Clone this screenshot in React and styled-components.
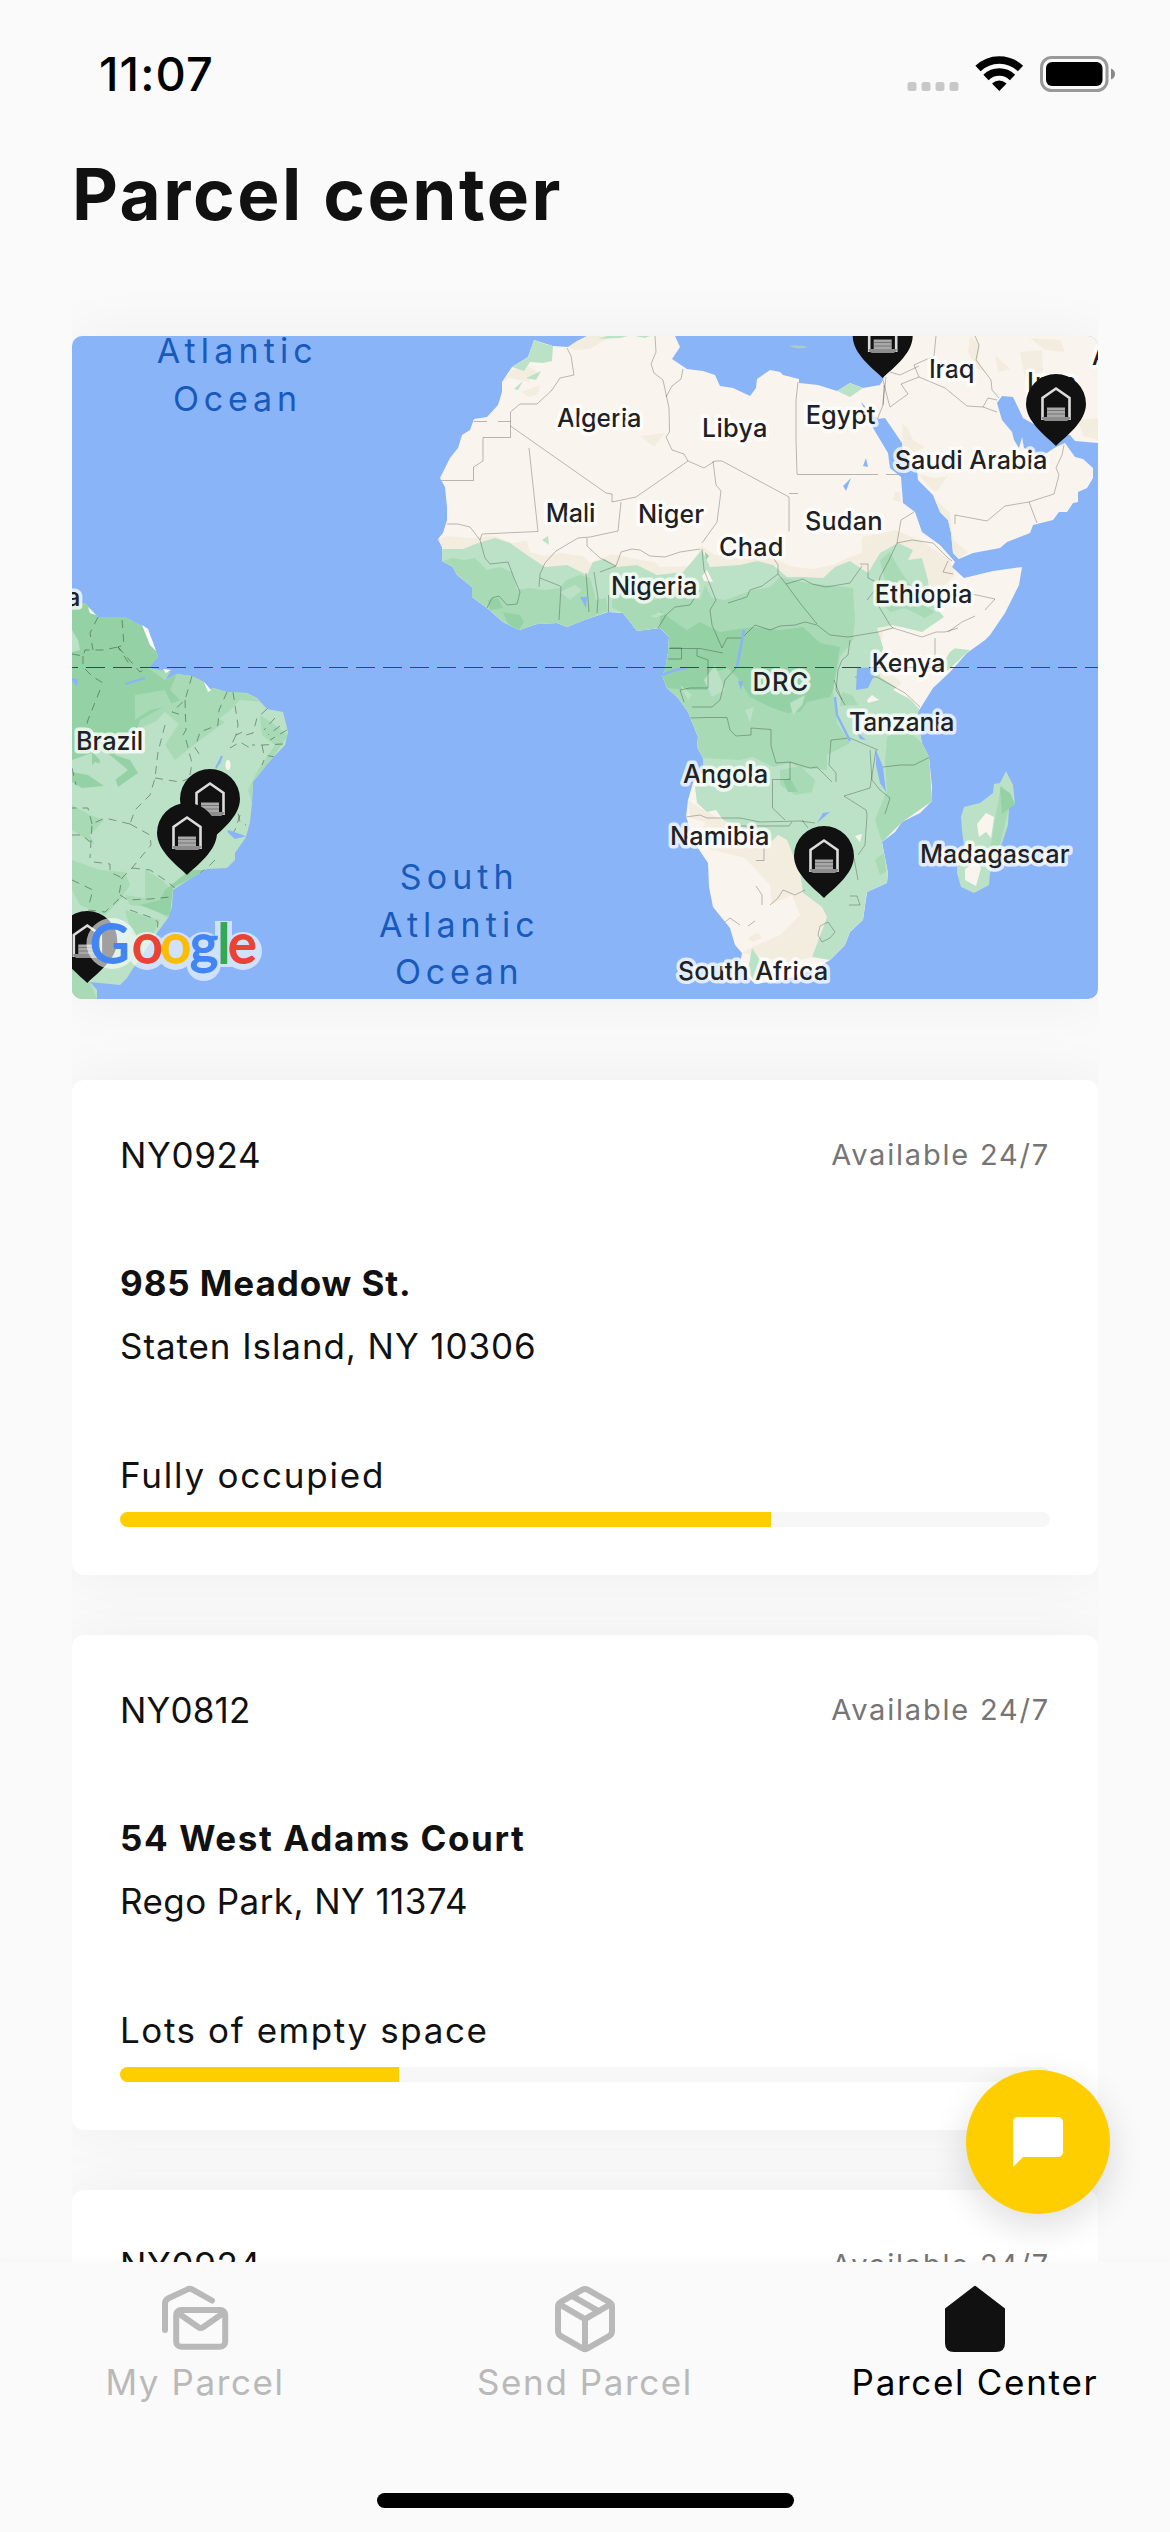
import React from "react";
import styled, { createGlobalStyle } from "styled-components";
import { FiPackage } from "react-icons/fi";
import { MdChatBubble } from "react-icons/md";

const GlobalStyle = createGlobalStyle`
  * { box-sizing: border-box; }
  body { margin: 0; background: #fafafa; }
`;

const Screen = styled.div`
  position: relative;
  display: flex;
  flex-direction: column;
  width: 1170px;
  height: 2532px;
  overflow: hidden;
  background: #fafafa;
  color: #111;
  font-family: Inter, "Liberation Sans", sans-serif;
`;

const StatusBar = styled.header`
  display: flex;
  align-items: center;
  justify-content: space-between;
  height: 138px;
  padding: 10px 54px 0 99px;
  color: #000;
`;

const Clock = styled.time`
  font-size: 47px;
  font-weight: 500;
  line-height: 60px;
  letter-spacing: 1.1px;
`;

const StatusIcons = styled.svg`
  display: block;
  width: 210px;
  height: 40px;
`;

const Header = styled.div`
  height: 138px;
  padding-left: 72px;
`;

const Title = styled.h1`
  margin: 0;
  font-size: 71px;
  line-height: 112px;
  font-weight: 700;
  letter-spacing: 2.5px;
`;

const Content = styled.main`
  display: flex;
  flex-direction: column;
  flex: 1;
  min-height: 0;
  margin: 0 72px;
  padding-top: 60px;
  overflow: hidden;
`;

const MapFrame = styled.section`
  flex: none;
  height: 663px;
  margin-bottom: 81px;
  border-radius: 10px;
  overflow: hidden;
  background: #8ab4f8;
  box-shadow: 0 0 60px rgba(17, 17, 17, 0.05);
`;

const MapSvg = styled.svg`
  display: block;
  width: 1026px;
  height: 663px;
`;

const CardList = styled.div`
  display: flex;
  flex-direction: column;
  gap: 60px;
`;

const Card = styled.article`
  display: flex;
  flex-direction: column;
  height: 495px;
  padding: 48px;
  border-radius: 12px;
  background: #fff;
  box-shadow: 0 0 60px rgba(17, 17, 17, 0.05);
`;

const CardHead = styled.div`
  display: flex;
  justify-content: space-between;
  align-items: center;
  margin-bottom: 74px;
`;

const Line = styled.div`
  font-size: 35px;
  line-height: 54px;
  white-space: nowrap;
  font-weight: ${(p) => (p.$bold ? 700 : 400)};
  letter-spacing: ${(p) => p.$spacing || 0}px;
`;

const Hours = styled.span`
  font-size: 29px;
  line-height: 54px;
  white-space: nowrap;
  color: #757575;
  letter-spacing: 1.8px;
`;

const Address = styled.div`
  display: flex;
  flex-direction: column;
  gap: 9px;
  margin-bottom: 75px;
`;

const Track = styled.div`
  height: 15px;
  margin-top: 10px;
  border-radius: 8px;
  overflow: hidden;
  background: #f7f7f7;
`;

const Fill = styled.div`
  height: 100%;
  background: #ffce00;
`;

const TabBar = styled.nav`
  position: relative;
  display: flex;
  flex-direction: column;
  align-items: center;
  justify-content: space-between;
  height: 270px;
  padding: 21px 0 24px;
  background: #fafafa;
  box-shadow: 0 0 12px rgba(17, 17, 17, 0.03);
`;

const Tabs = styled.div`
  display: grid;
  grid-template-columns: repeat(3, 1fr);
  width: 100%;
`;

const Tab = styled.div`
  display: flex;
  flex-direction: column;
  align-items: center;
  color: ${(p) => (p.$active ? "#000" : "#b9b9b9")};
  svg { display: block; width: 72px; height: 72px; }
`;

const HomeIndicator = styled.div`
  width: 417px;
  height: 15px;
  border-radius: 8px;
  background: #000;
`;

const ChatButton = styled.button`
  position: absolute;
  left: 966px;
  top: 2070px;
  display: flex;
  align-items: center;
  justify-content: center;
  width: 144px;
  height: 144px;
  padding: 0;
  border: 0;
  border-radius: 50%;
  background: #ffce00;
  color: #fff;
  box-shadow: 0 12px 36px rgba(17, 17, 17, 0.14);
`;

const AFRICA =
  "587,336 577,341 568,347 553,346 534,340 528,357 512,367 502,382 502,392 498,405 487,417 474,419 470,430 462,435 458,448 450,458 440,478 445,487 447,507 447,520 443,533 438,539 442,547 442,561 453,567 457,575 472,587 472,597 487,608 503,622 519,630 537,624 557,623 567,627 587,619 608,612 623,613 637,631 660,628 669,637 668,653 665,670 662,675 667,688 678,698 688,712 698,737 697,747 703,758 703,773 693,783 688,800 686,817 698,848 708,863 709,887 713,907 730,928 735,945 742,953 740,965 748,977 755,984 783,980 813,970 830,960 845,945 850,932 863,920 867,892 887,883 888,873 882,842 895,832 902,822 920,813 932,801 932,787 929,757 922,743 920,733 918,712 933,688 950,672 967,653 985,640 990,635 1005,613 1019,585 1022,567 993,571 964,578 952,567 955,562 940,545 922,532 915,512 903,503 901,477 890,468 888,453 873,428 861,402 877,419 885,418 902,443 903,453 917,470 918,480 933,495 940,512 948,520 951,533 953,553 959,559 973,553 1000,548 1007,542 1030,533 1033,525 1053,520 1059,512 1067,512 1073,503 1078,502 1078,492 1087,488 1093,478 1093,468 1083,459 1075,457 1065,443 1056,447 1042,456 1033,452 1024,448 1022,437 1019,448 1014,440 1012,432 1002,420 997,403 1002,396 1013,397 1023,418 1030,422 1053,435 1070,435 1075,441 1098,443 1098,336 895,336 887,365 883,380 880,385 863,388 850,383 837,391 818,385 799,383 799,379 783,375 780,372 770,370 757,379 756,388 750,396 733,388 720,386 715,375 703,371 687,369 672,359 680,347 675,336";

const SOUTH_AMERICA =
  "72,606 85,603 98,617 125,617 143,627 152,640 158,657 148,668 170,672 165,680 177,674 192,676 204,682 208,691 213,688 227,692 247,693 257,698 267,709 283,712 288,732 285,745 268,763 253,782 252,803 250,822 246,837 235,853 235,860 227,868 207,869 193,877 173,890 172,907 168,918 157,933 132,970 127,978 120,985 100,983 90,982 97,990 97,999 72,999";

const MADAGASCAR =
  "1006,771 1013,785 1015,804 1009,807 1008,825 1002,843 990,873 989,885 974,893 961,887 957,873 957,863 964,847 962,830 961,817 964,807 980,803 993,793 994,784 1000,783";

const SHAPES = {
  beige: [
    "438,539 447,536 470,538 495,536 512,543 527,541 530,552 545,556 560,553 583,556 590,563 612,554 640,560 655,562 660,567 690,566 702,546 715,555 735,558 760,548 778,560 790,566 812,569 833,565 850,557 862,553 862,537 895,530 920,540 950,560 955,575 940,590 942,605 925,612 905,625 880,640 890,660 905,690 700,640 500,570 442,550",
    "502,382 512,370 528,366 538,372 528,382 510,378", "521,392 540,385 538,394 529,397", "568,347 587,336 612,336 600,343 590,349 575,350",
    "640,436 665,433 654,447", "902,424 908,428 913,440 925,447 915,452 903,450", "918,474 935,478 948,476 936,492 930,488",
    "895,492 900,492 901,502 893,500", "933,497 950,513 953,540 968,552 959,559 948,555 945,525",
    "970,336 980,345 978,360 985,372 976,368 968,352", "995,355 1010,369 998,372", "1020,352 1042,350 1043,372 1025,378", "1030,338 1060,340 1065,352 1045,350", "1078,420 1098,418 1098,440 1083,436",
    "688,800 700,808 723,820 760,827 787,840 800,873 803,893 822,907 827,917 812,957 790,962 765,958 742,953 750,948 780,935 800,915 792,895 770,905 765,882 748,868 725,868 712,850 700,843 705,822 690,818",
    "723,880 738,886 741,900 748,912 738,915 730,905", "748,938 758,932 762,938 752,942",
  ],
  cream: [
    "883,632 897,627 907,630 913,638 925,633 945,630 960,622 975,620 985,635 975,645 955,648 940,660 920,690 915,703 908,698 893,690 902,683 885,668 890,655 882,645",
    "867,700 872,695 879,700 868,703", "855,836 862,834 860,842", "702,576 707,570 713,582 704,581",
    "713,850 745,858 770,885 772,905 760,915 780,912 778,930 745,935 725,910 718,880",
  ],
  light: [
    "442,549 463,549 478,543 495,538 510,543 527,555 545,567 567,565 587,575 593,562 605,559 617,567 637,565 657,575 683,572 702,550 710,567 740,565 757,561 773,565 787,577 803,577 823,578 835,567 850,561 868,573 880,553 898,543 913,550 908,560 922,558 928,580 930,600 944,617 922,632 893,625 877,628 883,647 880,668 880,677 905,693 919,709 920,733 922,743 929,757 932,801 902,822 882,842 888,873 887,883 867,892 863,920 850,932 845,945 830,960 812,957 827,917 822,907 803,893 800,873 787,840 778,835 772,841 760,835 740,827 723,820 716,810 707,812 697,803 695,787 703,773 703,758 697,747 698,737 688,712 667,688 662,675 668,653 669,637 660,628 637,631 623,613 608,612 567,627 519,630 487,608 472,587 442,561",
    "534,340 545,344 553,346 552,361 543,363 530,362 524,371 512,367 528,357",
    "514,389 523,381 518,390", "526,378 541,371 536,380", "598,339 607,336 628,336 620,338", "635,336 650,336 645,338",
    "837,391 850,383 863,388 850,397", "958,636 962,634 966,640 960,642", "952,648 970,650 946,672 944,662",
    "752,948 760,960 765,975 755,984 748,970", "542,540 548,536 549,545",
    "803,888 812,882 818,895 806,895",
  ],
  mid: [
    "442,561 453,558 463,560 475,558 487,570 500,567 512,572 517,590 530,588 545,590 560,588 566,580 580,575 590,578 596,600 606,598 608,611 587,619 567,627 519,630 503,622 487,608 472,597 472,587 457,575 453,567",
    "613,575 630,590 655,600 680,590 700,600 705,585 712,598 725,600 753,590 770,587 780,577 807,583 853,588 855,620 853,640 840,657 833,690 837,723 850,743 827,755 827,770 800,768 790,763 773,767 753,757 740,760 703,758 697,747 698,737 688,712 667,688 662,675 669,637 660,628 637,631 623,613 612,608",
    "887,737 905,728 922,743 929,757 932,801 902,822 882,842 875,820 887,790 885,762",
    "880,560 890,552 900,570 910,585 915,600 935,612 925,618 905,608 890,612 880,600 885,580",
    "780,770 800,766 815,780 812,792 795,795 780,785", "875,860 884,853 886,872 880,875",
    "842,692 852,695 858,705 840,706",
  ],
  dark: [
    "660,610 672,620 687,630 700,622 720,632 753,627 780,630 803,627 820,643 840,647 833,690 830,697 807,702 800,712 787,713 770,707 750,697 737,677 728,668 715,672 707,690 687,690 667,688 662,675 668,653 669,637 660,628",
    "503,612 520,615 524,622 519,630 508,624", "783,780 790,778 798,792 788,792", "705,552 709,556 706,560", "488,600 498,598 503,608 490,610",
  ],
  lightOver: [
    "704,680 715,665 725,690 712,697", "680,685 692,695 688,700", "745,710 754,707 750,722", "790,703 805,695 802,705 793,715",
    "560,592 575,585 582,590 570,600", "650,616 660,612 665,614 655,618", "870,596 890,590 895,600 880,608",
  ],
};

const BORDERS =
  "M440,480.500H473.500V467L483,461V437.500H510.500V426M474,421.500H487M498,421.500H510.500M510.500,426V412L520,404L537,404L552,390L560,378L574,375L571,356L567,348M510.500,426L606,493L612,494V502L636,497L688,461L704,468L715,461L722,461L789,497M789,497V531.500M713,461L716,485L721,491L717,522L702,543M789,493.500H798M798,382L796,400V440L797,474M797,474.500H878M886,474.500H900M655,336L656,352L651,364L654,373L663,380L669,408L669.500,432L666,437L672,450L684,454L688,461M683,369L681,379L672,386L666,397M529,448L538,531.500L482,534L480,540M621,502L618,531L590,537L578,538L556,551L545,563L540,574L539,587M480,540L470,527L458,524H447M480,540L485,558L490,564L508,562L514,578L520,592L517,604L507,605L499,596L492,598L487,608M540,578L560,586L561,587L559,620M587,538V546L600,558L616,566L621,552L632,549L640,550L650,556L665,557L680,552L700,549M586,573L589,612M594,572L598,598L597,613M600,572L616,566M608.500,595V612M702,549L704,570L716,600L710,610L712,625L722,648L727,638H743M658,628L666,615L675,607L690,605L700,590M728,603L747,597L750,590L762,586L778,574M778,574L786,584L800,603L817,624M786,584L803,579L812,584L826,587L850,583L862,566M744,636L755,625L770,630L780,626L795,625L805,622L817,625L830,635L848,637L878,632M772,556L778,565L778,574M860,564H868V578L878,583M897,543L889,560L880,577L875,600L890,625L893,628M897,543L901,520L914,512M897,543L912,540L933,543L948,558L952,561M948,561L943,572L953,574M867,600L875,590M972,594L995,599L985,610M975,616L962,622L948,632M878,632L893,628L922,637L936,632L945,632L958,628M935,638V670M850,640L848,655L842,660L838,670L836,690L845,705M670,648H681.500V659H668M669,648.500H700L723,653M697,649V656L708,660L708,688L690,688L680,690L684,702M737,667L725,680L720,700L712,707L692,707M690,718L706,717.500H727L730,730L736,736L751,735V728L771,729.500V746L776,763L790,762V779.500H772.500V808L785,820M790,762L800,765L810,768L817,767L828,778L832,782M831,740L829,765L836,773V782M831,740L850,738L878,750M686,817L700,815L707,818H740L760,822L800,821L815,823M792,822L789,826H740M802,820L808,828M764,848V860.500H756M756,886L762,895V905M770,905L778,898L783,890L795,895L805,890M725,922L730,918L740,925M748,926L755,921M877,420L883,405L886,377M855,677H877L905,693L920,707M834,680L842,700M844,796L866,810L867,815L865,845L858,855M844,796L870,788L876,750M885,814L890,798L880,790L872,780L870,750M883,767L900,765L914,765L930,757M820,926L828,922L835,932L830,938L822,942L818,935ZM850,896L857,896L860,905L849,905M854,858L858,880M883,380L888,400L890,407L908,394L901,384L919,377L945,388L967,406L983,407M919,377L914,365L934,356L936,336M884,385L883,405M890,372L900,375L919,366M983,407L997,412M983,407L988,398L997,400M975,336L979,345L976,360L991,380L992,390L999,398M955,515L987,521L1005,506L1029,502L1037,523M1029,502L1054,494L1059,475L1056,468L1062,455L1064,445M955,515V524";

const STATE_LINES =
  "M72,654L83,656L85,650L103,650L118,647M83,656L83,667L92,676L106,685M100,690L88,720L86,728M122,620L124,645L118,647L130,665M118,647L140,672L148,667M98,617L90,633L93,650M192,676L185,700L172,712L185,716M185,700L186,730L180,740M227,692L219,710L218,725L200,732L195,748L200,755M233,692L238,725L236,735L247,730M267,709L257,718L253,733L246,735M275,718L264,730M280,726L268,735M287,730L270,740M283,744L262,745L252,745M262,745L264,755L275,757M262,765L264,760M236,735L230,748L240,742L250,748M186,740L192,763L190,775M165,725L158,752L155,778L150,795L135,810L130,824M155,778L180,782L190,778M130,824L105,818L92,824L90,858M92,824L88,808H72M130,824L150,835L151,845L132,868L122,878L118,900L105,912L88,910M72,835H82L90,842M94,862L110,864V872L122,878M72,880L93,890L88,908M132,868L150,870L165,880L175,888M120,895L128,900L150,899L170,897M130,910L150,917L158,922L157,933M240,815L235,830L228,840M235,800L240,822L246,825M215,860L207,868L200,873M72,768L76,785";

const GEO_LABELS = [
  ["Algeria", 558, 640, 426.7], ["Libya", 703, 766, 436.7], ["Mali", 546.7, 594, 522], ["Niger", 639, 702.7, 523],
  ["Chad", 720, 782, 556], ["Nigeria", 612, 696, 595], ["Egypt", 806.7, 874, 424], ["Iraq", 930, 973, 378],
  ["Saudi Arabia", 895.7, 1046, 469], ["Sudan", 806, 881, 530], ["Ethiopia", 875.7, 971, 602.7], ["Kenya", 872.7, 944, 672],
  ["DRC", 753.5, 806.7, 690.7], ["Tanzania", 850, 953, 731], ["Angola", 684, 766.7, 783], ["Namibia", 671, 768, 845],
  ["South Africa", 679, 826.7, 979.7], ["Madagascar", 921, 1068, 862.7], ["Brazil", 77, 141.7, 750],
  ["Iran", 1028, 1075, 391], ["A", 1093, 1110, 365], ["a", 67, 80, 606],
];

const OCEAN_LABELS = [
  ["Atlantic", 157.7, 310.7, 363.3], ["Ocean", 174, 295, 410.7],
  ["South", 400.7, 511.7, 889], ["Atlantic", 380, 532.7, 936.7], ["Ocean", 396, 516.7, 984],
];

const PINS = [[882.7, 378], [1056, 446], [210, 841], [187, 875], [824, 898], [87.3, 983]];

const LOGO = [["G", 90, "#4285f4"], ["o", 132, "#ea4335"], ["o", 160.500, "#fbbc04"], ["g", 190, "#4285f4"], ["l", 217.500, "#34a853"], ["e", 228, "#ea4335"]];

const GeoLabel = styled.text`
  font-size: 25.5px;
  font-weight: 500;
  fill: #202124;
  stroke: rgba(255, 255, 255, 0.75);
  stroke-width: 7px;
  stroke-linejoin: round;
  paint-order: stroke;
`;

const OceanLabel = styled.text`
  font-size: 34px;
  fill: #185abc;
`;

const LogoLetter = styled.text`
  font-family: Lato, sans-serif;
  font-size: 54px;
  font-weight: 400;
  fill: ${(p) => p.$color};
  stroke: ${(p) => p.$color};
  stroke-width: 1.8px;
`;

const polys = (list, fill) => list.map((points, i) => <polygon key={fill + i} points={points} fill={fill} />);

function Pin({ x, y }) {
  return (
    <g transform={`translate(${x} ${y})`}>
      <path d="M0 0C-9-9-30-24-30-42a30 30 0 0 1 60 0C30-24 9-9 0 0Z" fill="#111" />
      <path d="M-13.500-26V-48L0-57.500L13.500-48V-26" fill="none" stroke="#dcdcdc" strokeWidth="2.600" />
      <path d="M-9-38.500H9V-29H-9Z" fill="#a8a8a8" />
      <path d="M-9-35.500H9M-9-32H9" stroke="#777" strokeWidth="1" />
      <path d="M-14-29H14V-27L11-25H-11L-14-27Z" fill="#8d8d8d" />
    </g>
  );
}

function WorldMap() {
  return (
    <MapSvg viewBox="72 336 1026 663">
      <defs>
        <clipPath id="africa"><polygon points={AFRICA} /></clipPath>
        <clipPath id="america"><polygon points={SOUTH_AMERICA} /></clipPath>
      </defs>
      <polygon points={AFRICA} fill="#f9f5ee" />
      <g clipPath="url(#africa)">
        {polys(SHAPES.beige, "#f3ede0")}
        {polys(SHAPES.light, "#bbe2c6")}
        {polys(SHAPES.mid, "#a8dab5")}
        {polys(SHAPES.dark, "#94d2a5")}
        {polys(SHAPES.lightOver, "#bbe2c6")}
        {polys(SHAPES.cream, "#f9f5ee")}
        <path d={BORDERS} fill="none" stroke="#000" strokeOpacity="0.260" strokeWidth="1" />
      </g>
      <g fill="#8ab4f8">
        <path d="M857 668L878 667L868 688L856 690Z" />
        <path d="M876 750L883 767L886 792L880 783L876 765Z" />
        <path d="M580 597H587L586 608Z" />
        <path d="M817 823L823 813L830 812Z" />
        <path d="M863 466L866 458L868 467Z" />
        <path d="M843 486L851 478L846 491Z" />
        <path d="M738 681L743 681L741 690Z" />
        <path d="M857 732L866 740L860 739Z" />
      </g>
      <path d="M835 697L837 715L850 741M744 630L737 667M662 675L675 670L687 668" fill="none" stroke="#8ab4f8" strokeWidth="2.500" />
      <path d="M789 346Q798 344 808 347Q798 350 789 346Z" fill="#a9cfc0" />
      <polygon points={SOUTH_AMERICA} fill="#bbe2c6" />
      <g clipPath="url(#america)">
        <polygon points="72,600 160,600 175,672 192,676 247,693 262,702 240,700 228,712 215,722 203,735 190,745 180,725 165,712 155,722 140,728 72,700" fill="#a8dab5" />
        <polygon points="72,600 158,600 160,660 148,668 165,680 177,674 170,690 180,700 163,707 140,720 137,730 120,738 115,755 130,760 138,773 118,787 112,768 95,762 88,770 72,765" fill="#94d2a5" />
        <polygon points="72,630 78,640 80,650 72,652" fill="#bbe2c6" />
        <polygon points="135,695 165,690 172,705 150,710 135,720" fill="#a8dab5" />
        <polygon points="92,752 100,760 98,775 115,780 128,770 110,755 100,750 72,760 72,780 92,785" fill="#bbe2c6" />
        <polygon points="72,782 82,788 104,786 88,775 72,772" fill="#94d2a5" />
        <polygon points="260,715 275,725 288,735 268,765 253,782 252,803 248,790 258,770 275,745 262,735" fill="#a8dab5" />
        <polygon points="182,690 200,700 210,715 225,722 200,740 175,760 165,745 178,725" fill="#a8dab5" />
        <polygon points="72,805 90,815 104,820 90,835 95,845 72,830" fill="#a8dab5" />
        <polygon points="72,860 100,870 125,872 130,885 120,900 105,915 80,905 72,890" fill="#a8dab5" />
        <polygon points="145,870 162,880 172,890 168,918 150,907 130,905 125,895 145,898" fill="#a8dab5" />
        <polygon points="173,888 193,877 205,870 190,870 165,890 160,900 140,905 165,915 170,915" fill="#94d2a5" />
        <polygon points="72,950 90,982 97,999 72,999" fill="#a8dab5" />
        <polygon points="125,910 160,920 150,940 132,935" fill="#a8dab5" />
        <path d={STATE_LINES} fill="none" stroke="#24382c" strokeOpacity="0.450" strokeWidth="1" strokeDasharray="8 6" />
      </g>
      <path d="M142 625L148 629L156 651L150 645ZM88 607L96 615L90 613ZM204 682L211 690L208 692ZM163 669L171 670L166 673Z" fill="#fff" />
      <path d="M125 684L145 678M216 768L222 756L219 764M228 831L243 836L235 838ZM72 679L77 680L76 684Z" fill="#8ab4f8" stroke="#8ab4f8" strokeWidth="2" />
      <ellipse cx="228" cy="765" rx="2.500" ry="5" fill="#f9f5ee" />
      <g>
        <polygon points={MADAGASCAR} fill="#bbe2c6" />
        <polygon points="1001,785 1010,795 1015,804 1009,807 1000,845 990,850 995,820" fill="#a8dab5" />
        <polygon points="1000,787 1010,793 1015,804 1002,814" fill="#94d2a5" />
        <path d="M977 824L986 813L994 817L991 838L986 832L979 837ZM965 869L976 862L981 868L976 886L965 880Z" fill="#f9f5ee" />
      </g>
      <path d="M59 667.500H1098" stroke="#7d2b3a" strokeWidth="1.200" strokeDasharray="19 8" />
      {GEO_LABELS.map(([name, from, to, y]) => (
        <GeoLabel key={name} x={from - 1} y={y} textLength={name.length > 1 ? to - from + 2.5 : undefined}>{name}</GeoLabel>
      ))}
      {OCEAN_LABELS.map(([name, from, to, y]) => (
        <OceanLabel key={name + y} x={from - 1} y={y} textLength={to - from + 3}>{name}</OceanLabel>
      ))}
      {PINS.map(([x, y]) => <Pin key={x} x={x} y={y} />)}
      <g fill="#fff" opacity="0.600">
        <circle cx="112" cy="943.500" r="25.500" />
        <circle cx="147" cy="951" r="19" />
        <circle cx="175.500" cy="951" r="19" />
        <circle cx="203.700" cy="951" r="19" />
        <ellipse cx="203.700" cy="965" rx="17" ry="16" />
        <rect x="215" y="921" width="17" height="46" />
        <circle cx="243" cy="951" r="19" />
      </g>
      {LOGO.map(([letter, x, color]) => <LogoLetter key={x} x={x} y="963" $color={color}>{letter}</LogoLetter>)}
    </MapSvg>
  );
}

const CENTERS = [
  { id: "NY0924", street: "985 Meadow St.", city: "Staten Island, NY 10306", state: "Fully occupied", load: 70, fit: [0.66, 0.91, 0.92, 1.78] },
  { id: "NY0812", street: "54 West Adams Court", city: "Rego Park, NY 11374", state: "Lots of empty space", load: 30, fit: [0.18, 1.61, 0.42, 1.58] },
  { id: "NY0924", street: "985 Meadow St.", city: "Staten Island, NY 10306", state: "Fully occupied", load: 70, fit: [0.66, 0.91, 0.92, 1.78] },
];

function MyParcelIcon() {
  return (
    <svg viewBox="159 2283 72 72" fill="none" stroke="currentColor" strokeWidth="6" strokeLinecap="round" strokeLinejoin="round">
      <path d="M165 2330V2303.500Q165 2300.500 168 2298.500L187 2289.600Q189.800 2288 192.500 2289.600L212 2300.500" />
      <rect x="176.200" y="2310" width="49" height="36.700" rx="5" />
      <path d="M178 2313L198.500 2327.300Q200.700 2328.800 203 2327.300L223.500 2313" />
    </svg>
  );
}

function HouseIcon() {
  return (
    <svg viewBox="939 2283 72 72" fill="#111">
      <path d="M974 2286.200Q975 2285.200 976 2286.200L1005 2308.500V2343Q1005 2352 996 2352H954Q945 2352 945 2343V2308.500Z" />
    </svg>
  );
}

export default function App() {
  return (
    <Screen>
      <GlobalStyle />
      <StatusBar>
        <Clock>11:07</Clock>
        <StatusIcons viewBox="906 54 210 40">
          <g fill="#c8c8c8">
            {[907.5, 921.5, 935.5, 949.5].map((x) => <rect key={x} x={x} y="82" width="9" height="9" rx="2.500" />)}
          </g>
          <g fill="none" stroke="#000" strokeWidth="7.500">
            <path d="M978 68.500A30.500 30.500 0 0 1 1020.500 68.500" />
            <path d="M986 77.500A19 19 0 0 1 1012.500 77.500" />
          </g>
          <path d="M999.300 91L992 83.500Q999.300 77.500 1006.600 83.500Z" fill="#000" />
          <rect x="1041.500" y="57.500" width="65.500" height="33" rx="10" fill="none" stroke="#999" strokeWidth="3" />
          <rect x="1046" y="62" width="56.500" height="24" rx="6" fill="#000" />
          <path d="M1111 68.500Q1115 70 1115 74T1111 79.500Z" fill="#888" />
        </StatusIcons>
      </StatusBar>
      <Header><Title>Parcel center</Title></Header>
      <Content>
        <MapFrame><WorldMap /></MapFrame>
        <CardList>
          {CENTERS.map((c, i) => (
            <Card key={i}>
              <CardHead>
                <Line $spacing={c.fit[0]}>{c.id}</Line>
                <Hours>Available 24/7</Hours>
              </CardHead>
              <Address>
                <Line $bold $spacing={c.fit[1]}>{c.street}</Line>
                <Line $spacing={c.fit[2]}>{c.city}</Line>
              </Address>
              <Line $spacing={c.fit[3]}>{c.state}</Line>
              <Track><Fill style={{ width: `${c.load}%` }} /></Track>
            </Card>
          ))}
        </CardList>
      </Content>
      <TabBar>
        <Tabs>
          <Tab><MyParcelIcon /><Line $spacing={1.6}>My Parcel</Line></Tab>
          <Tab><FiPackage /><Line $spacing={1.6}>Send Parcel</Line></Tab>
          <Tab $active><HouseIcon /><Line $spacing={1.7}>Parcel Center</Line></Tab>
        </Tabs>
        <HomeIndicator />
      </TabBar>
      <ChatButton aria-label="Chat"><MdChatBubble size={60} /></ChatButton>
    </Screen>
  );
}
